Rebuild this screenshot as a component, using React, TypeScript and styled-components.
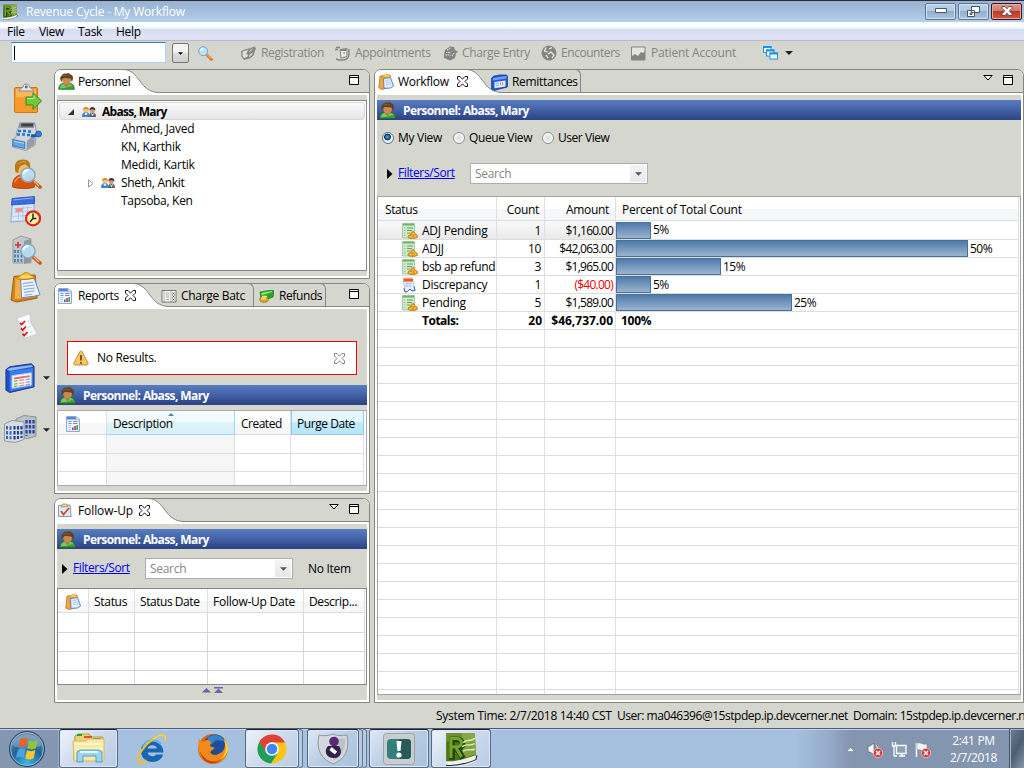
import React from "react";
import styled, { createGlobalStyle, css } from "styled-components";

const Global = createGlobalStyle`
  * { box-sizing: border-box; }
  html, body { margin: 0; padding: 0; }
  body { width: 1024px; height: 768px; overflow: hidden; }
  svg { display: block; flex: none; }
`;

const GREY = "#d5d7cf";
const LINE = "#848684";

const Screen = styled.div`
  width: 1024px;
  height: 768px;
  overflow: hidden;
  display: flex;
  flex-direction: column;
  background: ${GREY};
  color: #000;
  font: 12px/18px "Open Sans", "Noto Sans", sans-serif;
  letter-spacing: -0.3px;
  white-space: nowrap;
`;

const Text = styled.span<{ $ls?: number; $bold?: boolean; $color?: string }>`
  flex: none;
  letter-spacing: ${(p) => p.$ls ?? -0.3}px;
  font-weight: ${(p) => (p.$bold ? 700 : 400)};
  color: ${(p) => p.$color ?? "inherit"};
`;

/* ---------- title, menu and tool bars ---------- */

const TitleBar = styled.header`
  height: 22px;
  flex: none;
  display: flex;
  align-items: center;
  padding-left: 2px;
  border-top: 1px solid #2c2c34;
  background: linear-gradient(#98b2d2, #a6c2e0 60%, #b4d0ea);
  color: #fff;
`;
const TitleText = styled.span`
  flex: 1;
  padding-left: 8px;
  letter-spacing: -0.18px;
`;
const WindowButton = styled.span<{ $close?: boolean }>`
  width: 31px;
  height: 17px;
  margin: 0 0 1px 2px;
  display: flex;
  align-items: center;
  justify-content: center;
  border: 1px solid ${(p) => (p.$close ? "#4b1320" : "#5c7794")};
  border-radius: 2px;
  box-shadow: inset 0 0 0 1px ${(p) => (p.$close ? "#e5a69c" : "#cfe0f1")};
  background: ${(p) =>
    p.$close
      ? "linear-gradient(#e09a8c, #d27a6a 45%, #b93a26 50%, #cc6043)"
      : "linear-gradient(#bdd2ea, #b0c8e3 45%, #93afce 50%, #a9c6e2)"};
`;
const WindowButtons = styled.div`
  display: flex;
  padding-right: 2px;
`;

const MenuBar = styled.nav`
  height: 19px;
  flex: none;
  display: flex;
  padding-top: 1px;
  border-bottom: 1px solid #b3bcd5;
  background: linear-gradient(#fff 0 20%, #e9eef7 38%, #d5ddf0 42%, #dfe3f5 80%, #e3e0f3);
`;
const MenuItem = styled.span<{ $w: number }>`
  width: ${(p) => p.$w}px;
  padding-left: 7px;
`;

const ToolBar = styled.div`
  height: 28px;
  flex: none;
  display: flex;
  padding: 1px 0 0 11px;
  color: #858582;
`;
const QuickInput = styled.div`
  width: 155px;
  height: 21px;
  padding: 3px 0 0 2px;
  border: 1px solid #a9d3ee;
  border-top-color: #3c7fb1;
  background: #fff;
`;
const Cursor = styled.i`
  display: block;
  width: 1px;
  height: 14px;
  background: #000;
`;
const DropButton = styled.span`
  width: 17px;
  height: 20px;
  margin: 1px 0 0 6px;
  display: flex;
  align-items: center;
  justify-content: center;
  border: 1px solid #777;
  border-radius: 2px;
  background: linear-gradient(#f4f4f4 45%, #dcdcdc 50%, #cfcfcf);
`;
const ToolSlot = styled.span<{ $w: number; $gap?: number }>`
  width: ${(p) => p.$w}px;
  height: 22px;
  flex: none;
  display: flex;
  align-items: center;
  gap: ${(p) => p.$gap ?? 5}px;
`;

/* ---------- work area ---------- */

const Work = styled.main`
  height: 634px;
  flex: none;
  display: flex;
`;
const Rail = styled.aside`
  width: 54px;
  flex: none;
  display: flex;
  flex-direction: column;
  padding-top: 14px;
`;
const RailItem = styled.div<{ $h: number; $x: number }>`
  height: ${(p) => p.$h}px;
  padding-left: ${(p) => p.$x}px;
  display: flex;
  align-items: flex-start;
`;
const RailCaret = styled.span<{ $ml?: number }>`
  margin: 13px 0 0 ${(p) => p.$ml ?? 8}px;
`;
const LeftColumn = styled.div`
  width: 316px;
  margin-right: 4px;
  flex: none;
  display: flex;
  flex-direction: column;
  gap: 4px;
`;
const Panel = styled.section<{ $h: number; $w: number }>`
  height: ${(p) => p.$h}px;
  width: ${(p) => p.$w}px;
  flex: none;
  display: flex;
  flex-direction: column;
  border: 1px solid ${LINE};
  border-radius: 7px 7px 0 0;
  background: #fff;
  overflow: hidden;
`;
const TabStrip = styled.div`
  height: 23px;
  flex: none;
  display: flex;
  background: ${GREY};
  box-shadow: inset 0 -1px ${LINE};
`;
const ActiveTab = styled.div<{ $w: number; $gap?: number }>`
  width: ${(p) => p.$w}px;
  flex: none;
  display: flex;
  align-items: center;
  gap: ${(p) => p.$gap ?? 4}px;
  padding: 0 0 0 3px;
  background: #fff;
  position: relative;
  z-index: 1;
`;
const CurveBox = styled.span<{ $pull: number }>`
  flex: none;
  margin: -1px ${(p) => -p.$pull}px 0 0;
`;
const PlainTab = styled.div<{ $w: number; $gap?: number }>`
  width: ${(p) => p.$w}px;
  height: 23px;
  flex: none;
  display: flex;
  align-items: center;
  gap: ${(p) => p.$gap ?? 4}px;
  margin-top: -1px;
  padding-top: 2px;
  border: 1px solid ${LINE};
  border-left: 0;
  border-bottom: 0;
  border-radius: 0 6px 0 0;
`;
const TabTools = styled.div`
  margin-left: auto;
  display: flex;
  align-items: flex-start;
  gap: 10px;
  padding: 5px 10px 0 0;
`;
const Body = styled.div`
  flex: 1;
  min-height: 0;
  margin: 2px;
  display: flex;
  flex-direction: column;
  background: ${GREY};
`;
const BlueBar = styled.div<{ $mt: number; $gap: number }>`
  height: 20px;
  flex: none;
  margin-top: ${(p) => p.$mt}px;
  padding: 1px 0 0 2px;
  display: flex;
  align-items: center;
  gap: ${(p) => p.$gap}px;
  color: #fff;
  background: linear-gradient(#587dc0, #4464a8 45%, #2c4283);
`;

const Tree = styled.div`
  height: 171px;
  margin-top: 5px;
  padding: 1px;
  border: 1px solid #828790;
  background: #fff;
`;
const TreeRow = styled.div<{ $pad: number; $selected?: boolean }>`
  height: 18px;
  display: flex;
  align-items: center;
  padding-left: ${(p) => p.$pad}px;
  ${(p) =>
    p.$selected &&
    css`
      padding-top: 1px;
      border: 1px solid #d9d9d9;
      border-radius: 3px;
      background: linear-gradient(#fafafa, #e6e6e6);
    `}
`;
const TreeIcon = styled.span<{ $w: number }>`
  width: ${(p) => p.$w}px;
  flex: none;
`;

const Notice = styled.div`
  width: 290px;
  height: 34px;
  margin: 32px 0 0 10px;
  flex: none;
  display: flex;
  align-items: center;
  padding: 0 11px 0 5px;
  border: 1px solid #f00000;
  background: #fff;
`;
const NoticeText = styled.span`
  flex: 1;
  padding-left: 8px;
`;

const FilterRow = styled.div<{ $mt: number; $x: number }>`
  height: 21px;
  flex: none;
  margin-top: ${(p) => p.$mt}px;
  padding-left: ${(p) => p.$x}px;
  display: flex;
  align-items: center;
`;
const Link = styled.a`
  width: 77px;
  flex: none;
  padding: 0 0 1px 5px;
  color: #0000f0;
  text-decoration: underline;
  letter-spacing: -0.38px;
`;
const Combo = styled.div<{ $w: number }>`
  width: ${(p) => p.$w}px;
  height: 21px;
  flex: none;
  display: flex;
  align-items: center;
  justify-content: space-between;
  padding: 0 1px 0 4px;
  border: 1px solid #abadb3;
  background: #fff;
  color: #858585;
`;
const ComboArrow = styled.span`
  width: 16px;
  height: 17px;
  display: flex;
  align-items: center;
  justify-content: center;
  background: linear-gradient(#f4f4f4, #e8e8ea);
`;
const ItemCount = styled.span`
  margin-left: 15px;
`;

const RadioRow = styled.div`
  height: 18px;
  margin: 9px 0 0 5px;
  flex: none;
  display: flex;
`;
const RadioItem = styled.label<{ $w: number }>`
  width: ${(p) => p.$w}px;
  display: flex;
  align-items: center;
  gap: 4px;
`;
const RadioDot = styled.i<{ $on?: boolean }>`
  width: 12px;
  height: 12px;
  border: 1px solid ${(p) => (p.$on ? "#53748c" : "#8e8f8f")};
  border-radius: 50%;
  background: ${(p) =>
    p.$on
      ? "radial-gradient(circle at 45% 40%, #5cc0e8 0, #16466c 2.5px, #123a5c 3px, #eef3f6 3.8px)"
      : "radial-gradient(circle, #dadcdd 0, #f2f2f2 4px, #fff 5px)"};
`;

const Table = styled.div<{ $h: number; $mt: number; $edge?: string }>`
  height: ${(p) => p.$h}px;
  flex: none;
  margin-top: ${(p) => p.$mt}px;
  border: 1px solid ${(p) => p.$edge ?? "#828790"};
  background: #fff;
  overflow: hidden;
`;
const Row = styled.div<{ $cols: string; $h: number; $selected?: boolean }>`
  height: ${(p) => p.$h}px;
  display: grid;
  grid-template-columns: ${(p) => p.$cols};
  justify-content: start;
  ${(p) =>
    p.$selected &&
    css`
      background: linear-gradient(#fafafa, #e8e8e8) 0 0 / 237px 100% no-repeat;
    `}
`;
const Cell = styled.div<{
  $align?: string;
  $pl?: number;
  $pr?: number;
  $header?: boolean;
  $tint?: "sorted" | "hot" | "shade";
  $line?: string;
}>`
  min-width: 0;
  overflow: hidden;
  position: relative;
  display: flex;
  align-items: center;
  justify-content: ${(p) => p.$align ?? "flex-start"};
  padding: 1px ${(p) => p.$pr ?? 0}px 0 ${(p) => p.$pl ?? 0}px;
  border-right: 1px solid ${(p) => p.$line ?? "#dedfe2"};
  border-bottom: 1px solid ${(p) => p.$line ?? "#dcdcdc"};
  ${(p) =>
    p.$header &&
    css`
      padding-top: 3px;
      background: linear-gradient(#fff 50%, #f6f7f9 55%);
    `}
  ${(p) =>
    p.$tint === "sorted" &&
    css`
      border-color: #9ad9f3;
      background: linear-gradient(#f3fbfe 45%, #ddf3fa 52%, #d8f0f8);
    `}
  ${(p) =>
    p.$tint === "hot" &&
    css`
      border-color: #93c9e3;
      border-left: 1px solid #93c9e3;
      background: linear-gradient(#e5f7fe 45%, #bdeafd 52%, #b8e5f8);
    `}
  ${(p) => p.$tint === "shade" && css`background: #f6f6f6;`}
`;
const BarCell = styled(Cell)`
  padding-top: 0;
`;
const SortMark = styled.span`
  position: absolute;
  top: 2px;
  left: 61px;
`;
const Bar = styled.span<{ $w: number }>`
  width: ${(p) => p.$w}px;
  height: 17px;
  flex: none;
  margin-right: 2px;
  border: 1px solid #4a6f9b;
  background: linear-gradient(#4f7aa9, #9ab4d0);
`;
const IconCell = styled.span`
  width: 20px;
  flex: none;
`;
const Pager = styled.div`
  display: flex;
  gap: 3px;
  margin: 2px 0 0 145px;
`;

/* ---------- status bar and task bar ---------- */

const StatusBar = styled.footer`
  height: 25px;
  flex: none;
  display: flex;
  align-items: center;
  padding: 1px 0 0 436px;
`;
const StatusPart = styled.span<{ $w: number; $ls: number }>`
  width: ${(p) => p.$w}px;
  flex: none;
  letter-spacing: ${(p) => p.$ls}px;
`;

const TaskBar = styled.div`
  height: 40px;
  flex: none;
  display: flex;
  border-top: 1px solid #4c5b72;
  box-shadow: inset 0 1px #c5d6ea;
  background: linear-gradient(90deg, #8596b0 0 58px, #a5c1df 59px 795px, #95abc9 830px, #8495af 850px);
`;
const TaskItem = styled.div<{ $w: number; $ml: number; $framed?: boolean; $lit?: boolean }>`
  width: ${(p) => p.$w}px;
  height: 39px;
  flex: none;
  margin-left: ${(p) => p.$ml}px;
  display: flex;
  align-items: center;
  justify-content: center;
  ${(p) =>
    p.$framed &&
    css`
      border: 1px solid #5a6a82;
      border-top-color: #20242e;
      border-radius: 3px;
      box-shadow: inset 0 0 0 1px #dce8f5;
      background: ${p.$lit
        ? "linear-gradient(135deg, #f0f4fa, #ccdaec 50%, #b9cde5)"
        : "linear-gradient(135deg, #dfe8f4, #b9cde5 50%, #a9c2de)"};
    `}
`;
const StackEdge = styled.i`
  width: 4px;
  height: 39px;
  border: 1px solid #66788f;
  border-left: 0;
  border-radius: 0 3px 3px 0;
  background: #b4cae3;
`;
const Tray = styled.div`
  margin-left: auto;
  display: flex;
  align-items: center;
  color: #fff;
`;
const TrayIcons = styled.div`
  display: flex;
  align-items: center;
  gap: 8px;
  padding-top: 2px;
`;
const Clock = styled.div`
  width: 73px;
  margin-left: 5px;
  padding: 1px 0 0 2px;
  text-align: center;
  line-height: 17px;
  letter-spacing: -0.35px;
`;
const ShowDesktop = styled.span`
  width: 15px;
  height: 39px;
  border-left: 1px solid #44546a;
  box-shadow: inset 1px 1px #a6b3c5;
  background: linear-gradient(120deg, #6d7f94, #4c5d72 50%, #8595aa);
`;

/* ---------- drawings ---------- */

type IconProps = { w: number; h?: number; vb: string; children: React.ReactNode };
const Icon = ({ w, h, vb, children }: IconProps) => (
  <svg width={w} height={h ?? w} viewBox={vb} fill="none">
    {children}
  </svg>
);

const Caret = ({ w = 7, h = 4, color = "#222" }: { w?: number; h?: number; color?: string }) => (
  <Icon w={w} h={h} vb="0 0 8 4"><path d="M0 0h8L4 4z" fill={color} /></Icon>
);
const RightCaret = () => <Icon w={6} h={10} vb="0 0 6 10"><path d="M0 0l5.500 5L0 10z" fill="#000" /></Icon>;
const MaxIcon = () => (
  <Icon w={10} vb="0 0 10 10"><path d="M.5.5h9v9h-9zM0 2.500h10" stroke="#000" fill="#fff" /></Icon>
);
const ViewMenuIcon = () => (
  <Icon w={10} h={6} vb="0 0 10 6"><path d="M.8.5h8.400L5 5z" stroke="#000" fill="#fff" /></Icon>
);
const CloseX = ({ color = "#000" }: { color?: string }) => (
  <Icon w={11} vb="0 0 11 11">
    <path d="M.5.5h2.500l2.500 2.700L8 .5h2.500V3L8 5.500 10.500 8v2.500H8L5.500 7.800 3 10.500H.5V8L3 5.500.5 3z" stroke={color} fill="#fff" strokeWidth=".9" />
  </Icon>
);
const TabCurve = () => (
  <Icon w={36} h={24} vb="0 0 36 24">
    <path d="M0 .5C17 .5 16 23.500 36 23.500V24H0z" fill="#fff" />
    <path d="M0 .5C17 .5 16 23.500 36 23.500" stroke={LINE} />
  </Icon>
);

const PersonIcon = () => (
  <Icon w={17} vb="0 0 17 17">
    <path d="M.7 16.300C.7 12.500 2.500 10.500 6 10h5c3.500.5 5.300 2.500 5.300 6.300z" fill="#3f9f3a" stroke="#226f2b" strokeWidth=".8" />
    <path d="M2 15.500c0-3 1.500-4.300 4-4.500l2.500 3 2.500-3c2 .3 3 1 3.500 2.500-3-1-6 2-12.500 2z" fill="#74cc5e" />
    <path d="M6 9.500h5v2L8.500 14 6 11.500z" fill="#b9763f" />
    <ellipse cx="8.600" cy="7" rx="4.400" ry="4.500" fill="#c88b54" />
    <path d="M3.300 9C1.600 6 2 3.200 4 2.600 4.500.8 6.500.2 7.500.8 9-.2 12-.1 12.500 1.500c2.800.5 3.200 4 1.400 7.300-.8-1-.7-2.300-1.400-3.300C10.500 6 7.500 4.300 5 5.600c-.9.800-.8 2.300-1.700 3.400z" fill="#65421f" />
    <path d="M5 3.500C6 2 7.500 2 8.500 3M9.500 2.500l1.500.5" stroke="#9a6a38" strokeWidth=".9" />
  </Icon>
);
const PairIcon = () => (
  <Icon w={14} h={12} vb="0 0 14 12">
    <path d="M0 11c0-3 1-5 4-5s3.500 2 3.500 5z" fill="#3f87d6" />
    <path d="M7 11c0-3 1-4.500 3.500-4.500S14 8 14 11z" fill="#56606e" />
    <circle cx="4" cy="4" r="2.800" fill="#eec58e" /><path d="M1 4c0-4 6-4 6 0-2-1.500-4-1.500-6 0z" fill="#d48a20" />
    <circle cx="10.200" cy="4.500" r="2.600" fill="#d89a70" /><path d="M7.500 4c0-4 6-4 6 .5-2-1.500-4-1.500-6-.5z" fill="#343438" />
    <path d="M3 7l1 2 1-2M9.500 7.500l1 2 1-2" stroke="#fff" />
  </Icon>
);
const MagIcon = () => (
  <Icon w={15} vb="0 0 15 15">
    <path d="M8.500 8.500l5 5" stroke="#d9772a" strokeWidth="2.800" strokeLinecap="round" />
    <path d="M8.800 8.200l4.500 4.600" stroke="#f7c071" />
    <circle cx="5.200" cy="5.200" r="4.500" fill="#b9e3fa" stroke="#6ea5d4" />
    <path d="M2.500 5C3 3 4 2.500 5.500 2.500" stroke="#fff" strokeWidth="1.300" />
  </Icon>
);
const RIcon = ({ size = 16 }: { size?: number }) => (
  <Icon w={size} vb="0 0 32 32">
    <path d="M2 1h27l1 23-10 4H2z" fill="#4f7518" /><path d="M17 1h12l1 20-13 4z" fill="#7fa33c" />
    <path d="M2 1h27v5C20 10 10 10 2 9z" fill="#8fae4b" opacity=".5" />
    <path d="M7.500 26V7h4.500c7 0 7 8.500 0 8.500H8M12.500 16l5.500 9" stroke="#23420b" strokeWidth="5.500" />
    <path d="M6.500 24.500V6h5c6.500 0 6.500 8 0 8H7M11.500 15l5 8.500" stroke="#74a32a" strokeWidth="3" />
    <path d="M18 10c4-4 6 0 11-4M17 14c4-4 7 0 12-3M18 18c4-3 7 0 11-2" stroke="#dbe8b8" strokeWidth="1.400" />
    <path d="M1 28c3-1 6 0 10-1 7-1 12-3 18-5l2 1-1 5C22 31 10 34 2 31z" fill="#eef1ee" /><path d="M2 31c3 1 6 .5 10 0 7-1 12-2 18-5l1-4" stroke="#222" />
  </Icon>
);
const PadIcon = ({ size = 16 }: { size?: number }) => (
  <Icon w={size} vb="0 0 32 32">
    <path d="M4 4.500l22-1.500 2 24-21 4-6-2z" fill="#d2821c" stroke="#a0610f" /><path d="M5.500 6L24 4.500l1.500 21L5 28z" fill="#f6ae48" />
    <path d="M11 8l14-1.500 6 17-6 1.500-13 1.500z" fill="#eef4ff" stroke="#5f83c2" />
    <path d="M13 12l11-1.500M13.500 15l11.500-1.500M14 18l12-1.500M14.500 21l11-1.500M15 24l8-1" stroke="#8fb0e4" strokeWidth="1.200" />
    <path d="M7 7c0-3 4-2 5-4 2-3 8-3 9 0 1 1 4 0 4 3-6 2-12 2-18 1z" fill="#fdc92f" stroke="#b97a09" /><path d="M11 4.500c4 1 7 1 10 0" stroke="#fff2ad" />
  </Icon>
);
/* the sixteen pixel pad: a tilted blue sheet over an orange board */
const SmallPadIcon = () => (
  <Icon w={16} vb="0 0 16 16">
    <path d="M2 2l10-1 1 12-9 2.500L.8 14z" fill="#f0a53a" stroke="#c07a1c" strokeWidth=".8" />
    <path d="M5.500 4.500l7-1 3 8.500-3 2-6.500.3z" fill="#e6effd" stroke="#4f79c2" strokeWidth=".9" />
    <path d="M7.500 6.500l4.500-.7M7.800 8.500l5-.7M8 10.500l5-.7" stroke="#a6c0ea" strokeWidth=".8" />
    <path d="M4 3c0-1.500 2-1 3-2.200 1.500-.8 3-.5 3.500.7l2 .8v1z" fill="#fbd45c" stroke="#c08f24" strokeWidth=".5" />
  </Icon>
);
const CalWindow = ({ size = 16 }: { size?: number }) => (
  <Icon w={size} vb="0 0 32 32">
    <path d="M1 7l4-3L28 .8l3 2.700v22L5 31.500 1 29z" fill="#1f50c8" stroke="#15358e" />
    <path d="M5 9l25-4v20L5 30z" fill="#3f7be8" /><path d="M2 7l4-2L28 2l2 2L5 8.500z" fill="#8db8fa" />
    <path d="M7.500 13.500L28 10.500v13L7.500 27z" fill="#f4f8ff" stroke="#b5d0f8" />
    <path d="M9.500 16.500l17-2.500" stroke="#e0705e" strokeWidth="2" />
    <path d="M9.500 19.500l4-.6M9.500 22.500l4-.6M9.500 25l4-.6" stroke="#7cbb62" strokeWidth="1.500" />
    <path d="M15 18.700l5.500-.8M15 21.700l5.500-.8M15 24.400l5.500-.8" stroke="#e09a90" strokeWidth="1.500" />
    <path d="M22 17.700l4.500-.7M22 20.700l4.500-.7M22 23.400l4.500-.7" stroke="#9d9fdc" strokeWidth="1.500" />
  </Icon>
);
const RemitIcon = () => (
  <Icon w={17} vb="0 0 17 17">
    <path d="M.6 4L3 2l4-.5L8 1h7.500l.9 1v11L3 16.400.6 15z" fill="#1f5bd6" stroke="#123a9c" strokeWidth=".8" />
    <path d="M2 4l13.500-2v2.500L2 6.500z" fill="#6ea2f5" /><path d="M3.500 8l11-1.500v6L3.500 14.300z" fill="#e3edfd" />
    <path d="M5 9.500l3-.5M5 11.500l3-.5" stroke="#7aa3e6" strokeWidth=".9" /><path d="M9.500 11V8.500M11.500 11.500V8" stroke="#e67b6a" />
  </Icon>
);
const ReportIcon = () => (
  <Icon w={14} h={16} vb="0 0 14 16">
    <path d="M.5.5h9.500l3.500 3.500v11.500H.5z" fill="#eef3fc" stroke="#8fa9d6" /><path d="M1 1h8.500l1 2.500H1z" fill="#5d84cb" /><path d="M10 .5V4h3.500z" fill="#dbe6f8" stroke="#8fa9d6" strokeWidth=".7" />
    <path d="M2.500 5.500h3M7 5.500h4.500M2.500 7.500h3M7 7.500h4.500" stroke="#6f92d2" />
    <path d="M2.500 9.500H5M2.500 11.500H5M2.500 13.500H5" stroke="#9db5df" strokeWidth=".8" />
    <path d="M6.800 14v-2.500" stroke="#2e67d1" strokeWidth="1.600" /><path d="M9 14v-4" stroke="#e23131" strokeWidth="1.600" /><path d="M11.200 14V9" stroke="#31ab44" strokeWidth="1.600" />
  </Icon>
);
const ChargeTabIcon = () => (
  <Icon w={16} h={13} vb="0 0 15 13">
    <path d="M.5.5h14v11.500H.5z" fill="#fff" stroke="#555" strokeWidth=".8" /><path d="M2.500 1v11M9.500 1v11" stroke="#888" strokeWidth=".7" />
    <path d="M4 3h4M4 5h4M4 7h4M4 9.500h4" stroke="#888" strokeWidth=".8" /><path d="M11 2.500l2 2M13 2.500l-2 2M11 5.500l2 2M13 5.500l-2 2M11 8.500l2 2M13 8.500l-2 2" stroke="#222" strokeWidth=".8" />
  </Icon>
);
const RefundIcon = () => (
  <Icon w={15} h={13} vb="0 0 15 13">
    <path d="M1 2l12-2 2 1-1 6-10 4-2-2z" fill="#2ba52b" stroke="#176e19" strokeWidth=".7" /><path d="M2 3l11-2v1L3 5z" fill="#9cec78" />
    <ellipse cx="5" cy="9.500" rx="4.200" ry="2.800" fill="#dba821" stroke="#916508" strokeWidth=".7" /><path d="M2 8.500h5M3 6.500h5" stroke="#ffe778" strokeWidth="1.500" />
  </Icon>
);
const FollowIcon = () => (
  <Icon w={14} h={15} vb="0 0 14 15">
    <path d="M.5 2.500l11.500-.5 1.200 11.500H.5z" fill="#dceaf9" stroke="#6b80a6" strokeWidth=".8" /><path d="M3 4l1.500-3h4L10 3.500z" fill="#ecd392" stroke="#a48b49" strokeWidth=".8" />
    <path d="M3 8l2.500 3.500L11 5" stroke="#d8401f" strokeWidth="1.700" />
  </Icon>
);
const WarnIcon = () => (
  <Icon w={16} vb="0 0 16 16">
    <path d="M7 1.500c.5-.8 1.500-.8 2 0l6 11.500c.3 1-.2 2-1 2H2c-1 0-1.500-1-1-2z" fill="#f8c766" stroke="#c08a2c" />
    <path d="M8 5v5.500M8 12v1.700" stroke="#5b4413" strokeWidth="1.700" />
  </Icon>
);
const LedgerIcon = () => (
  <Icon w={16} h={16} vb="0 0 16 16">
    <path d="M.5.5h12v14.500H.5z" fill="#d3ead0" stroke="#8fc08b" strokeWidth=".8" /><path d="M1 .8h11v1.800H1z" fill="#6db568" />
    <path d="M2 5h1.500M2 7.500h1.500M2 10h1.500M2 12.500h1.500" stroke="#93c48f" /><path d="M5 5h6M5 7.500h5M5 10h3" stroke="#4f9a4c" strokeWidth=".9" />
    <path d="M6 14.500c-.5-2 1-3 2.500-2.500 0-2 1-3.500 2.500-3.500s2 1.500 2 2.500c2 0 3 1.500 2.500 3.500-2 1.500-7.500 1.500-9.500 0z" fill="#e3a01c" stroke="#a36a10" strokeWidth=".5" />
    <path d="M7.500 13.500h2M10.500 10.500H12M12.500 13H14" stroke="#ffe793" strokeWidth=".8" />
  </Icon>
);
const DiscrepancyIcon = () => (
  <Icon w={14} h={16} vb="0 0 14 16">
    <path d="M1 4h10l2 9-3 1-2-2-3 3-3-1 .5-4z" fill="#e8eefb" stroke="#9aaede" strokeWidth=".7" /><path d="M1.500.8h9.500V4.500h-9.500z" fill="#f2561f" /><path d="M1.500 1h9.500v1h-9.500z" fill="#f9a184" />
    <path d="M3 6.500h7M3 9h6M5 5v5M8 5v5" stroke="#a7b7e0" strokeWidth=".7" />
    <path d="M2 11l1 4 2.500-.5L8 12l2 2 3-.5-1-4" stroke="#2c4fb3" strokeWidth=".9" />
  </Icon>
);

const ClipArrow = () => (
  <Icon w={28} h={31} vb="0 0 28 31">
    <rect x=".5" y="4.500" width="23" height="25" rx="1.500" fill="#f79a2c" stroke="#d07312" />
    <path d="M2 6h20v8H2z" fill="#ffb65a" /><path d="M5 8c0-3 3-2 4-4 .5-4 6-4 6.500 0 1 2 4 1 4 4z" fill="#e2e5e9" stroke="#858a91" /><circle cx="12.300" cy="4" r="1.400" fill="#666" />
    <path d="M12 14h7V9.500L27.500 18 19 26.500V22h-7z" fill="#71c83b" stroke="#348a18" /><path d="M13 15.500h7v-3" stroke="#c9f09a" />
  </Icon>
);
const RegisterIcon = () => (
  <Icon w={30} vb="0 0 30 30">
    <path d="M5 10L8 2l15 .5 1.500 9L23 24l-9 5.500L.5 26 0 19l4-3z" fill="#d3d7dc" stroke="#8b929b" strokeWidth=".8" />
    <path d="M15 20l8-7-.5 10.500-8 5.500z" fill="#959da8" />
    <path d="M7.500 1.500h15.500l-1 5.500H7z" fill="#8d949c" /><path d="M9.500 2.500h12l-.7 3H9z" fill="#3d4146" />
    <path d="M6 10h3M11 10h3M16 10.500h3M5 13.500h3M10 13.500h3M15 14h3" stroke="#2277cf" strokeWidth="2.300" />
    <path d="M.8 18.500l12 2.500v6.500L.8 25z" fill="#5ba7ea" stroke="#2b6cae" strokeWidth=".8" /><path d="M2 20.300l10 2" stroke="#b5dcfa" />
    <path d="M19 14.500c3 1 5 0 8-1" stroke="#1c5aa3" strokeWidth="3" /><circle cx="26.500" cy="13" r="3" fill="#2f80d4" stroke="#174e91" strokeWidth=".7" />
  </Icon>
);
const LensOverlay = () => (
  <>
    <path d="M21 22l7 6" stroke="#c9581c" strokeWidth="3.600" strokeLinecap="round" /><path d="M22 22l5 5" stroke="#f5c193" strokeWidth="1.200" />
    <circle cx="16" cy="16" r="7" fill="#b8e0f5" fillOpacity=".92" stroke="#8ba8bd" strokeWidth="1.500" /><path d="M11.500 15c.5-3 2-4 5-4" stroke="#fff" strokeWidth="1.800" />
  </>
);
const PersonSearch = () => (
  <Icon w={30} vb="0 0 30 30">
    <path d="M.5 28c0-8 3-11 8-12h6c5 1 8 5 8 12-5 2-16 2-22 0z" fill="#d8540f" stroke="#a43a05" strokeWidth=".8" /><path d="M8 16l4 4 3-4" fill="#ffdca8" />
    <path d="M3 23c1-3 2-5 6-5" stroke="#f39250" strokeWidth="1.500" />
    <ellipse cx="11" cy="9" rx="6" ry="8" fill="#f1bd70" /><path d="M3.500 13C1 3 6 .3 11 .5c7 0 8.500 5 6.500 10-1-3-2.500-4-4-5-4 0-7 2-7 8-1 .5-2.300.3-3-.5z" fill="#b67a16" /><path d="M6 5c2-2 5-3 8-2" stroke="#dda83f" />
    <LensOverlay />
  </Icon>
);
const CalendarClock = () => (
  <Icon w={31} vb="0 0 31 31">
    <path d="M3 3l21-2v23L.8 26z" fill="#dce8fb" stroke="#8aa7d9" /><path d="M2 2.500L24.500.5v7L1.500 9z" fill="#3a6de0" stroke="#2750ad" strokeWidth=".8" /><path d="M3 4l20-2" stroke="#8fb0f6" />
    <path d="M4 12.500l18-1M4 16.500l14-1M3 20.500l13-1M8.500 11v13M13 10.500v13M17.500 10.500v6" stroke="#a8bde3" strokeWidth=".8" /><path d="M5.500 14.200l7-.5" stroke="#f48a82" strokeWidth="3.400" />
    <circle cx="23" cy="22.300" r="7" fill="#fff1a6" stroke="#df2518" strokeWidth="2.200" /><path d="M23 17.500v5l-3 3.500M23 22.500h3.500" stroke="#222" strokeWidth="1.500" />
  </Icon>
);
const HospitalSearch = () => (
  <Icon w={30} vb="0 0 30 30">
    <path d="M1 5l8-4 10 3v24H1z" fill="#c3c7cb" stroke="#8b9094" strokeWidth=".8" /><path d="M12 6l7-2v23l-7 2z" fill="#8f969c" />
    <path d="M6 7v6M3 10h6" stroke="#dc2828" strokeWidth="1.500" /><path d="M3 15v12M6 15v13M9.500 15v13" stroke="#2e83b8" strokeWidth="1.700" strokeDasharray="3 1.500" />
    <LensOverlay />
  </Icon>
);
const CheckSheet = () => (
  <Icon w={22} h={26} vb="0 0 22 26">
    <path d="M.8 4.500C5 5 8 2 14 .8l.8 9.200 6.200 11-13 4.200c1-4-.5-8-3-11z" fill="#fafcff" stroke="#c2cbd5" strokeWidth=".8" />
    <path d="M4 10l1.800 1.500L9 8M5 15.500l1.800 1.500L10 13.500M6.500 21l1.800 1.500 3.200-3.500" stroke="#e3191c" strokeWidth="1.800" /><path d="M11 8.500l2.500-.7M12 14l3-.8M13.500 19.500l3-.8" stroke="#b5c2d1" strokeWidth=".8" />
  </Icon>
);
const Buildings = () => (
  <Icon w={33} h={28} vb="0 0 33 28">
    <path d="M12 4l8-3.500L32 2v19l-8 2.500L12 22z" fill="#bcc2ca" stroke="#7b828c" strokeWidth=".8" /><path d="M.5 9L8 5.500l12 1.500v17.500l-9 3L.5 26z" fill="#d9dde2" stroke="#828a94" strokeWidth=".8" />
    <path d="M22.500 5v16M26 5v15M29.500 5v14" stroke="#234b9b" strokeWidth="2.300" strokeDasharray="3.500 1.500" />
    <path d="M3 11v13M6.500 11.300v13" stroke="#3a66b9" strokeWidth="2" strokeDasharray="3.500 1.500" /><path d="M10.500 11v14M14 11v13M17.500 11v12" stroke="#1e4796" strokeWidth="2.200" strokeDasharray="3.500 1.500" />
  </Icon>
);

const G = "#858582";
const RegIcon = () => (
  <Icon w={15} h={14} vb="0 0 15 14">
    <path d="M.8 5.500L4 4l4-1 1 2-2 6-4 2-2-3z" stroke={G} strokeWidth="1.300" fill="#dfe0da" /><path d="M3 13l5-1 4-3 1-4" stroke={G} strokeWidth="1.500" />
    <path d="M5 8l3-5 5-2.500 2 1.500-1 3-6 4z" fill={G} /><path d="M8.500 5.500l3-2.500" stroke="#e2e3de" />
  </Icon>
);
const ApptIcon = () => (
  <Icon w={15} h={15} vb="0 0 15 15"><path d="M1 1.500h4M0 3.500h3M1 13l3 1h5c4-1 5-3 5-6V3" stroke={G} strokeWidth="1.400" /><path d="M5 3.500l7-1v8l-6 1.500z" fill="#ecece6" stroke={G} /><path d="M5.500 4h6" stroke={G} strokeWidth="2" /><path d="M8 7h2" stroke={G} /></Icon>
);
const ChargeIcon = () => (
  <Icon w={15} h={15} vb="0 0 15 15"><path d="M2 4l5-3.500 4 .5 1 3 3 1.500-2 2-1 4.500-5 2.500L.8 12 1 8z" fill={G} /><path d="M4 4l4-2M3 6.500l5 0M2.500 9h5M9 10l2-3" stroke="#e8e9e4" strokeDasharray="1.500 .8" /></Icon>
);
const EncounterIcon = () => (
  <Icon w={16} vb="0 0 16 16"><circle cx="8" cy="8" r="7.500" fill={G} /><path d="M5 2.500L3.500 6l3 1M8 4l3-1.500M7 9l3-2 3 3-2 3M5 10l2 3" stroke="#e9eae5" strokeWidth="1.300" /></Icon>
);
const AccountIcon = () => (
  <Icon w={15} h={15} vb="0 0 15 15"><path d="M.5 1h13.500v13H.5z" stroke={G} fill="#e5e6e0" /><path d="M1 14v-4l3-2 3 2 3-4 2 1 2-2v9z" fill={G} /></Icon>
);
const CascadeIcon = () => (
  <Icon w={15} h={14} vb="0 0 15 14">{[[0, 0], [3, 3.500], [6.500, 6.500]].map(([x, y]) => <g key={x}><rect x={x + 0.5} y={y + 0.5} width="7.500" height="6" fill="#fff" stroke="#1594e8" /><path d={`M${x} ${y + 1}h8.500`} stroke="#1594e8" strokeWidth="2" /></g>)}</Icon>
);

const StartOrb = () => (
  <Icon w={38} vb="0 0 38 38">
    <defs><radialGradient id="orb" cx=".5" cy=".9" r=".9"><stop stopColor="#35b9e2" /><stop offset=".5" stopColor="#1f6696" /><stop offset="1" stopColor="#7590ac" /></radialGradient></defs>
    <circle cx="19" cy="19" r="17.500" fill="url(#orb)" stroke="#263f5e" /><circle cx="19" cy="19" r="16.400" stroke="#8fb9d4" />
    <path d="M4 15C7 1 31 1 34 15c-9 5-21 5-30 0z" fill="#fff" opacity=".23" />
    <path d="M12.500 9c2.500-1.500 4.500-1.300 7 0l-1.700 8.500c-2.800-1.700-5-1.500-7.300 0z" fill="#eb612c" /><path d="M21 10c3 1.800 6 1.800 9-.5l-2 8.500c-3 2-5.500 1.800-8.500.3z" fill="#8cc63e" />
    <path d="M10 19.500c2.800-1.700 5-1.500 7.500 0L15.800 28c-2.500-1.700-5-1.700-7.800 0z" fill="#4ca2e4" /><path d="M19 20c3 1.700 5.700 1.500 8.500-.2L25.600 28c-2.800 2-5.500 2-8.400.3z" fill="#fcc72e" />
  </Icon>
);
const FolderIcon = () => (
  <Icon w={34} h={32} vb="0 0 34 32">
    <path d="M3 3l3-2h11l2 3h12v23H2z" fill="#ead27b" stroke="#bb9b40" /><path d="M5 2h5" stroke="#24a331" strokeWidth="2" /><path d="M12 4h8" stroke="#e05330" strokeWidth="2" /><path d="M21 6h8" stroke="#3185ca" strokeWidth="2" />
    <path d="M1 8h13l2-2h16v22H2z" fill="#f9e9a5" stroke="#d6ba61" /><path d="M3 11h28M3 16h28" stroke="#fff5c9" strokeWidth="2" />
    <path d="M5 29V19l3-2h19l3 2v10h-6v-6H11v6z" fill="#9bd5ef" stroke="#4a9fc7" /><path d="M8 19h18" stroke="#e3f7ff" strokeWidth="2" />
  </Icon>
);
const IeIcon = () => (
  <Icon w={32} vb="0 0 32 32">
    <path d="M27.500 19.500H11.500c.5 4 7 5 8.500 2h7C25 32 5 32 5 18S27.500 5 27.500 19.500zM11.500 15.500h9.500c-.5-4.500-9-4.500-9.500 0z" fill="#1a66b4" />
    <path d="M7.500 14C10 6 20 5.500 24.500 11" stroke="#58b4ec" strokeWidth="2.200" />
    <path d="M29 8C31 1 26 0 17 6 8 12 1 23 2 28c.7 3.500 5 2 8.500-.5" stroke="#f0be2f" strokeWidth="2.200" /><path d="M29 8C31 1 26 0 17 6" stroke="#f9dd7a" />
  </Icon>
);
const FirefoxIcon = () => (
  <Icon w={32} vb="0 0 32 32">
    <circle cx="16" cy="16" r="15" fill="#e66000" /><circle cx="18" cy="13" r="11.500" fill="#1f4d9c" /><path d="M10 5c5-5 15-4 17 3l-8-1-5 5z" fill="#3483cd" />
    <path d="M2 6l4 3c3-3 7-2 8 0l-1 4 5 2-5 4c2 5 9 3 13-1 3-4 2-10 0-14 7 7 5 20-1 24-8 5-18 2-22-6C1 17 1 11 2 6z" fill="#f08a1b" /><path d="M26 6c4 5 4 15-2 20 9-5 9-15 2-20z" fill="#ffd83f" /><path d="M3 18c4 10 14 13 22 8-6 7-20 6-22-8z" fill="#cf3e12" />
  </Icon>
);
const ChromeIcon = () => (
  <Icon w={30} vb="0 0 30 30">
    <circle cx="15" cy="15" r="14.500" fill="#fbc519" /><path d="M2.300 8A14.500 14.500 0 0 1 28 8.500H15L8.500 19z" fill="#db4437" /><path d="M2.300 8A14.500 14.500 0 0 0 14 29.500L21 18.500H9z" fill="#1ba05b" />
    <circle cx="15" cy="15" r="6.800" fill="#fff" /><circle cx="15" cy="15" r="5.300" fill="#4285f4" />
  </Icon>
);
const ShieldIcon = () => (
  <Icon w={34} h={32} vb="0 0 34 32">
    <path d="M17 1c5 2 9 2 14 1 3 15-2 24-14 29C5 26 0 17 3 2c5 1 9 1 14-1z" fill="#d5d8dc" stroke="#8f969e" /><path d="M17 4c4 2 8 2 12 1 1 11-3 19-12 23z" fill="#bcc1c6" />
    <circle cx="18" cy="8.500" r="4.800" fill="#5a2a78" /><path d="M12 13h11c3 4 3 12-5 12-9 0-10-8-6-12z" fill="#35204b" /><path d="M14.500 15.500l5.500 4.500" stroke="#fff" strokeWidth="3.600" />
  </Icon>
);
const AlertIcon = () => (
  <Icon w={32} vb="0 0 32 32">
    <rect x=".5" y=".5" width="31" height="31" rx="3" fill="#c9cdcf" stroke="#9ba3a7" /><rect x="4" y="6" width="24" height="20" rx="4" fill="#347f7b" /><path d="M16 6h8q4 0 4 4v12q0 4-4 4h-8z" fill="#285a58" />
    <path d="M13.500 8h5l-1 10h-3z" fill="#fff" /><circle cx="16" cy="22" r="2.600" fill="#fff" />
  </Icon>
);
const RedX = () => (
  <><circle cx="11" cy="11" r="4.700" fill="#d83a35" stroke="#f2d8d8" strokeWidth=".7" /><path d="M9 9l4 4M13 9l-4 4" stroke="#fff" strokeWidth="1.500" /></>
);

/* ---------- screen parts ---------- */

const PersonnelBar = ({ mt, gap = 7 }: { mt: number; gap?: number }) => (
  <BlueBar $mt={mt} $gap={gap}><PersonIcon /><Text $bold $ls={-0.6}>Personnel: Abass, Mary</Text></BlueBar>
);

const people = ["Ahmed, Javed", "KN, Karthik", "Medidi, Kartik"];

const statuses = [
  { name: "ADJ Pending", count: "1", amount: "$1,160.00", pct: "5%", bar: 35, icon: <LedgerIcon /> },
  { name: "ADJJ", count: "10", amount: "$42,063.00", pct: "50%", bar: 352, icon: <LedgerIcon /> },
  { name: "bsb ap refund", count: "3", amount: "$1,965.00", pct: "15%", bar: 105, icon: <LedgerIcon /> },
  { name: "Discrepancy", count: "1", amount: "($40.00)", pct: "5%", bar: 35, icon: <DiscrepancyIcon />, negative: true },
  { name: "Pending", count: "5", amount: "$1,589.00", pct: "25%", bar: 176, icon: <LedgerIcon /> },
];

const WF = "119px 48px 71px 403px";
const RP = "49px 128px 56px 73px";
const FU = "31px 46px 73px 96px 61px";

const PersonnelPanel = () => (
  <Panel $w={316} $h={210}>
    <TabStrip>
      <ActiveTab $w={68} $gap={3}><PersonIcon /><Text $ls={-0.45}>Personnel</Text></ActiveTab>
      <CurveBox $pull={0}><TabCurve /></CurveBox>
      <TabTools><MaxIcon /></TabTools>
    </TabStrip>
    <Body>
      <Tree>
        <TreeRow $pad={8} $selected>
          <TreeIcon $w={14}><Icon w={6} vb="0 0 6 6"><path d="M6 0v6H0z" fill="#333" /></Icon></TreeIcon>
          <TreeIcon $w={20}><PairIcon /></TreeIcon>
          <Text $bold $ls={-0.7}>Abass, Mary</Text>
        </TreeRow>
        {people.map((p) => <TreeRow key={p} $pad={62}><Text $ls={-0.25}>{p}</Text></TreeRow>)}
        <TreeRow $pad={29}>
          <TreeIcon $w={13}><Icon w={6} h={9} vb="0 0 6 9"><path d="M.5.8v7.400L5 4.500z" stroke="#999" fill="#fff" /></Icon></TreeIcon>
          <TreeIcon $w={20}><PairIcon /></TreeIcon>
          <Text>Sheth, Ankit</Text>
        </TreeRow>
        <TreeRow $pad={62}><Text>Tapsoba, Ken</Text></TreeRow>
      </Tree>
    </Body>
  </Panel>
);

const ReportsPanel = () => (
  <Panel $w={316} $h={211}>
    <TabStrip>
      <ActiveTab $w={78} $gap={6}><ReportIcon /><Text $ls={-0.4}>Reports</Text><CloseX /></ActiveTab>
      <CurveBox $pull={8}><TabCurve /></CurveBox>
      <PlainTab $w={93}><ChargeTabIcon /><Text>Charge Batc</Text></PlainTab>
      <PlainTab $w={72} $gap={5}><span /><RefundIcon /><Text $ls={-0.4}>Refunds</Text></PlainTab>
      <TabTools><MaxIcon /></TabTools>
    </TabStrip>
    <Body>
      <Notice><WarnIcon /><NoticeText>No Results.</NoticeText><CloseX color="#777" /></Notice>
      <PersonnelBar mt={10} />
      <Table $h={76} $mt={5} $edge="#a7aaae">
        <Row $cols={RP} $h={24}>
          <Cell $header $pl={8}><ReportIcon /></Cell>
          <Cell $header $tint="sorted" $pl={6}><SortMark><Icon w={6} h={3} vb="0 0 6 3"><path d="M0 3l3-3 3 3z" fill="#4d86a3" /></Icon></SortMark><Text $ls={-0.4}>Description</Text></Cell>
          <Cell $header $pl={6}><Text $ls={-0.5}>Created</Text></Cell>
          <Cell $header $tint="hot" $pl={5}><Text $ls={-0.45}>Purge Date</Text></Cell>
        </Row>
        {[19, 18, 18].map((h, i) => (
          <Row key={i} $cols={RP} $h={h}><Cell /><Cell $tint="shade" /><Cell /><Cell /></Row>
        ))}
      </Table>
    </Body>
  </Panel>
);

const FollowUpPanel = () => (
  <Panel $w={316} $h={205}>
    <TabStrip>
      <ActiveTab $w={93} $gap={6}><FollowIcon /><Text $ls={-0.1}>Follow-Up</Text><CloseX /></ActiveTab>
      <CurveBox $pull={0}><TabCurve /></CurveBox>
      <TabTools><ViewMenuIcon /><MaxIcon /></TabTools>
    </TabStrip>
    <Body>
      <PersonnelBar mt={5} />
      <FilterRow $mt={9} $x={5}>
        <RightCaret /><Link>Filters/Sort</Link>
        <Combo $w={148}><Text>Search</Text><ComboArrow><Caret color="#555" /></ComboArrow></Combo>
        <ItemCount>No Item</ItemCount>
      </FilterRow>
      <Table $h={97} $mt={9}>
        <Row $cols={FU} $h={24}>
          <Cell $header $pl={7}><SmallPadIcon /></Cell>
          <Cell $header $pl={5}><Text>Status</Text></Cell>
          <Cell $header $pl={5}><Text $ls={-0.45}>Status Date</Text></Cell>
          <Cell $header $pl={5}><Text $ls={-0.25}>Follow-Up Date</Text></Cell>
          <Cell $header $pl={5}><Text $ls={-0.35}>Descrip...</Text></Cell>
        </Row>
        {[20, 19, 19, 19].map((h, i) => (
          <Row key={i} $cols={FU} $h={h}>{[0, 1, 2, 3, 4].map((c) => <Cell key={c} $line="#d3d6d6" />)}</Row>
        ))}
      </Table>
      <Pager>
        <Icon w={9} h={6} vb="0 0 9 6"><path d="M0 5.500L4.500 1 9 5.500z" fill="#6964a6" /></Icon>
        <Icon w={9} h={6} vb="0 0 9 6"><path d="M0 0h9v1.500H0zM0 6l4.500-4.500L9 6z" fill="#6964a6" /></Icon>
      </Pager>
    </Body>
  </Panel>
);

const WorkflowPanel = () => (
  <Panel $w={650} $h={634}>
    <TabStrip>
      <ActiveTab $w={91}><SmallPadIcon /><Text>Workflow</Text><span /><CloseX /></ActiveTab>
      <CurveBox $pull={11}><TabCurve /></CurveBox>
      <PlainTab $w={90} $gap={4}><RemitIcon /><Text>Remittances</Text></PlainTab>
      <TabTools><ViewMenuIcon /><MaxIcon /></TabTools>
    </TabStrip>
    <Body>
      <PersonnelBar mt={5} />
      <RadioRow>
        <RadioItem $w={71}><RadioDot $on />My View</RadioItem>
        <RadioItem $w={89}><RadioDot /><Text $ls={-0.38}>Queue View</Text></RadioItem>
        <RadioItem $w={89}><RadioDot /><Text $ls={-0.45}>User View</Text></RadioItem>
      </RadioRow>
      <FilterRow $mt={16} $x={10}>
        <RightCaret /><Link>Filters/Sort</Link>
        <Combo $w={178}><Text>Search</Text><ComboArrow><Caret color="#555" /></ComboArrow></Combo>
      </FilterRow>
      <Table $h={499} $mt={12} $edge="#a0a4aa">
        <Row $cols={WF} $h={24}>
          <Cell $header $pl={7}><Text $ls={-0.4}>Status</Text></Cell>
          <Cell $header $align="flex-end" $pr={5}><Text>Count</Text></Cell>
          <Cell $header $align="flex-end" $pr={6}><Text>Amount</Text></Cell>
          <Cell $header $pl={6}><Text $ls={-0.25}>Percent of Total Count</Text></Cell>
        </Row>
        {statuses.map((s, i) => (
          <Row key={s.name} $cols={WF} $h={i ? 18 : 19} $selected={!i}>
            <Cell $pl={24}><IconCell>{s.icon}</IconCell><Text $ls={s.name === "bsb ap refund" ? -0.4 : -0.25}>{s.name}</Text></Cell>
            <Cell $align="flex-end" $pr={3}><Text>{s.count}</Text></Cell>
            <Cell $align="flex-end" $pr={2}><Text $ls={-0.75} $color={s.negative ? "#f00000" : undefined}>{s.amount}</Text></Cell>
            <BarCell><Bar $w={s.bar} /><Text $ls={-0.5}>{s.pct}</Text></BarCell>
          </Row>
        ))}
        <Row $cols={WF} $h={18}>
          <Cell $pl={44}><Text $bold $ls={-0.5}>Totals:</Text></Cell>
          <Cell $align="flex-end" $pr={2}><Text $bold $ls={0}>20</Text></Cell>
          <Cell $align="flex-end" $pr={2}><Text $bold $ls={0}>$46,737.00</Text></Cell>
          <Cell $pl={5}><Text $bold $ls={-0.25}>100%</Text></Cell>
        </Row>
        {Array.from({ length: 21 }, (_, i) => (
          <Row key={i} $cols={WF} $h={18}><Cell /><Cell /><Cell /><Cell /></Row>
        ))}
      </Table>
    </Body>
  </Panel>
);

export default function App() {
  return (
    <Screen>
      <Global />
      <TitleBar>
        <RIcon />
        <TitleText>Revenue Cycle - My Workflow</TitleText>
        <WindowButtons>
          <WindowButton><Icon w={12} h={6} vb="0 0 12 6"><path d="M.5.5h11v4H.5z" fill="#fff" stroke="#4b5566" /></Icon></WindowButton>
          <WindowButton><Icon w={13} h={11} vb="0 0 13 11"><path d="M4.500.5h8v6h-8zM.5 4.500h7v6h-7z" fill="#fff" stroke="#4b5566" /><path d="M3 7h2v1.500H3z" stroke="#4b5566" /></Icon></WindowButton>
          <WindowButton $close><Icon w={12} h={10} vb="0 0 12 10"><path d="M1 .5h3l2 2.300L8 .5h3v1.800L8.300 5 11 7.700v1.800H8L6 7.200 4 9.500H1V7.700L3.700 5 1 2.300z" fill="#fff" stroke="#533" strokeWidth=".8" /></Icon></WindowButton>
        </WindowButtons>
      </TitleBar>
      <MenuBar>
        <MenuItem $w={32}>File</MenuItem>
        <MenuItem $w={39}>View</MenuItem>
        <MenuItem $w={38}>Task</MenuItem>
        <MenuItem $w={40}>Help</MenuItem>
      </MenuBar>
      <ToolBar>
        <QuickInput><Cursor /></QuickInput>
        <DropButton><Caret w={5} h={3} color="#000" /></DropButton>
        <ToolSlot $w={9} />
        <ToolSlot $w={43}><MagIcon /></ToolSlot>
        <ToolSlot $w={94}><RegIcon /><Text $ls={-0.35}>Registration</Text></ToolSlot>
        <ToolSlot $w={108}><ApptIcon /><Text $ls={-0.3}>Appointments</Text></ToolSlot>
        <ToolSlot $w={98} $gap={4}><ChargeIcon /><Text $ls={-0.35}>Charge Entry</Text></ToolSlot>
        <ToolSlot $w={90} $gap={4}><EncounterIcon /><Text $ls={-0.45}>Encounters</Text></ToolSlot>
        <ToolSlot $w={132}><AccountIcon /><Text $ls={-0.2}>Patient Account</Text></ToolSlot>
        <ToolSlot $w={40} $gap={7}><CascadeIcon /><Caret w={8} /></ToolSlot>
      </ToolBar>
      <Work>
        <Rail>
          <RailItem $h={38} $x={14}><ClipArrow /></RailItem>
          <RailItem $h={38} $x={12}><RegisterIcon /></RailItem>
          <RailItem $h={37} $x={12}><PersonSearch /></RailItem>
          <RailItem $h={39} $x={10}><CalendarClock /></RailItem>
          <RailItem $h={37} $x={12}><HospitalSearch /></RailItem>
          <RailItem $h={41} $x={10}><PadIcon size={31} /></RailItem>
          <RailItem $h={50} $x={16}><CheckSheet /></RailItem>
          <RailItem $h={52} $x={5}><CalWindow size={30} /><RailCaret><Caret /></RailCaret></RailItem>
          <RailItem $h={30} $x={4}><Buildings /><RailCaret $ml={6}><Caret /></RailCaret></RailItem>
        </Rail>
        <LeftColumn>
          <PersonnelPanel />
          <ReportsPanel />
          <FollowUpPanel />
        </LeftColumn>
        <WorkflowPanel />
      </Work>
      <StatusBar>
        <StatusPart $w={181} $ls={-0.3}>System Time: 2/7/2018 14:40 CST</StatusPart>
        <StatusPart $w={236} $ls={-0.46}>User: ma046396@15stpdep.ip.devcerner.net</StatusPart>
        <StatusPart $w={171} $ls={-0.46}>Domain: 15stpdep.ip.devcerner.n</StatusPart>
      </StatusBar>
      <TaskBar>
        <TaskItem $w={40} $ml={7}><StartOrb /></TaskItem>
        <TaskItem $w={59} $ml={12} $framed $lit><FolderIcon /></TaskItem>
        <TaskItem $w={40} $ml={14}><IeIcon /></TaskItem>
        <TaskItem $w={40} $ml={21}><FirefoxIcon /></TaskItem>
        <TaskItem $w={54} $ml={12} $framed $lit><ChromeIcon /></TaskItem>
        <StackEdge />
        <TaskItem $w={52} $ml={4} $framed><ShieldIcon /></TaskItem>
        <StackEdge /><StackEdge />
        <TaskItem $w={60} $ml={2} $framed><AlertIcon /></TaskItem>
        <TaskItem $w={60} $ml={2} $framed $lit><RIcon size={34} /></TaskItem>
        <Tray>
          <TrayIcons>
            <Icon w={9} h={5} vb="0 0 9 5"><path d="M.5 4.500L4.500.5l4 4z" fill="#fff" stroke="#5e6e86" strokeWidth=".5" /></Icon>
            <Icon w={20} h={16} vb="-4 0 20 16"><path d="M1 4h2l4-3v12L3 10H1z" fill="#f7f7f7" stroke="#555f6f" strokeWidth=".7" /><path d="M9 3c2 2 2 5 0 7" stroke="#eee" /><RedX /></Icon>
            <Icon w={16} vb="0 0 16 16"><path d="M5.500 3.500h9.500v8H5.500zM8 14h6M11 12v2" fill="#8f9fb5" stroke="#fff" strokeWidth="1.300" /><path d="M1.500 0v4h3V0M3 4v10M3 14h3" stroke="#fff" strokeWidth="1.300" /></Icon>
            <Icon w={16} vb="0 0 16 16"><path d="M1.500 1v14" stroke="#fff" strokeWidth="1.500" /><path d="M2 1c4-1 5 2 10 1v7c-5 1-6-2-10-1z" fill="#f4f4f4" stroke="#778" strokeWidth=".5" /><RedX /></Icon>
          </TrayIcons>
          <Clock><div>2:41 PM</div><div>2/7/2018</div></Clock>
          <ShowDesktop />
        </Tray>
      </TaskBar>
    </Screen>
  );
}
